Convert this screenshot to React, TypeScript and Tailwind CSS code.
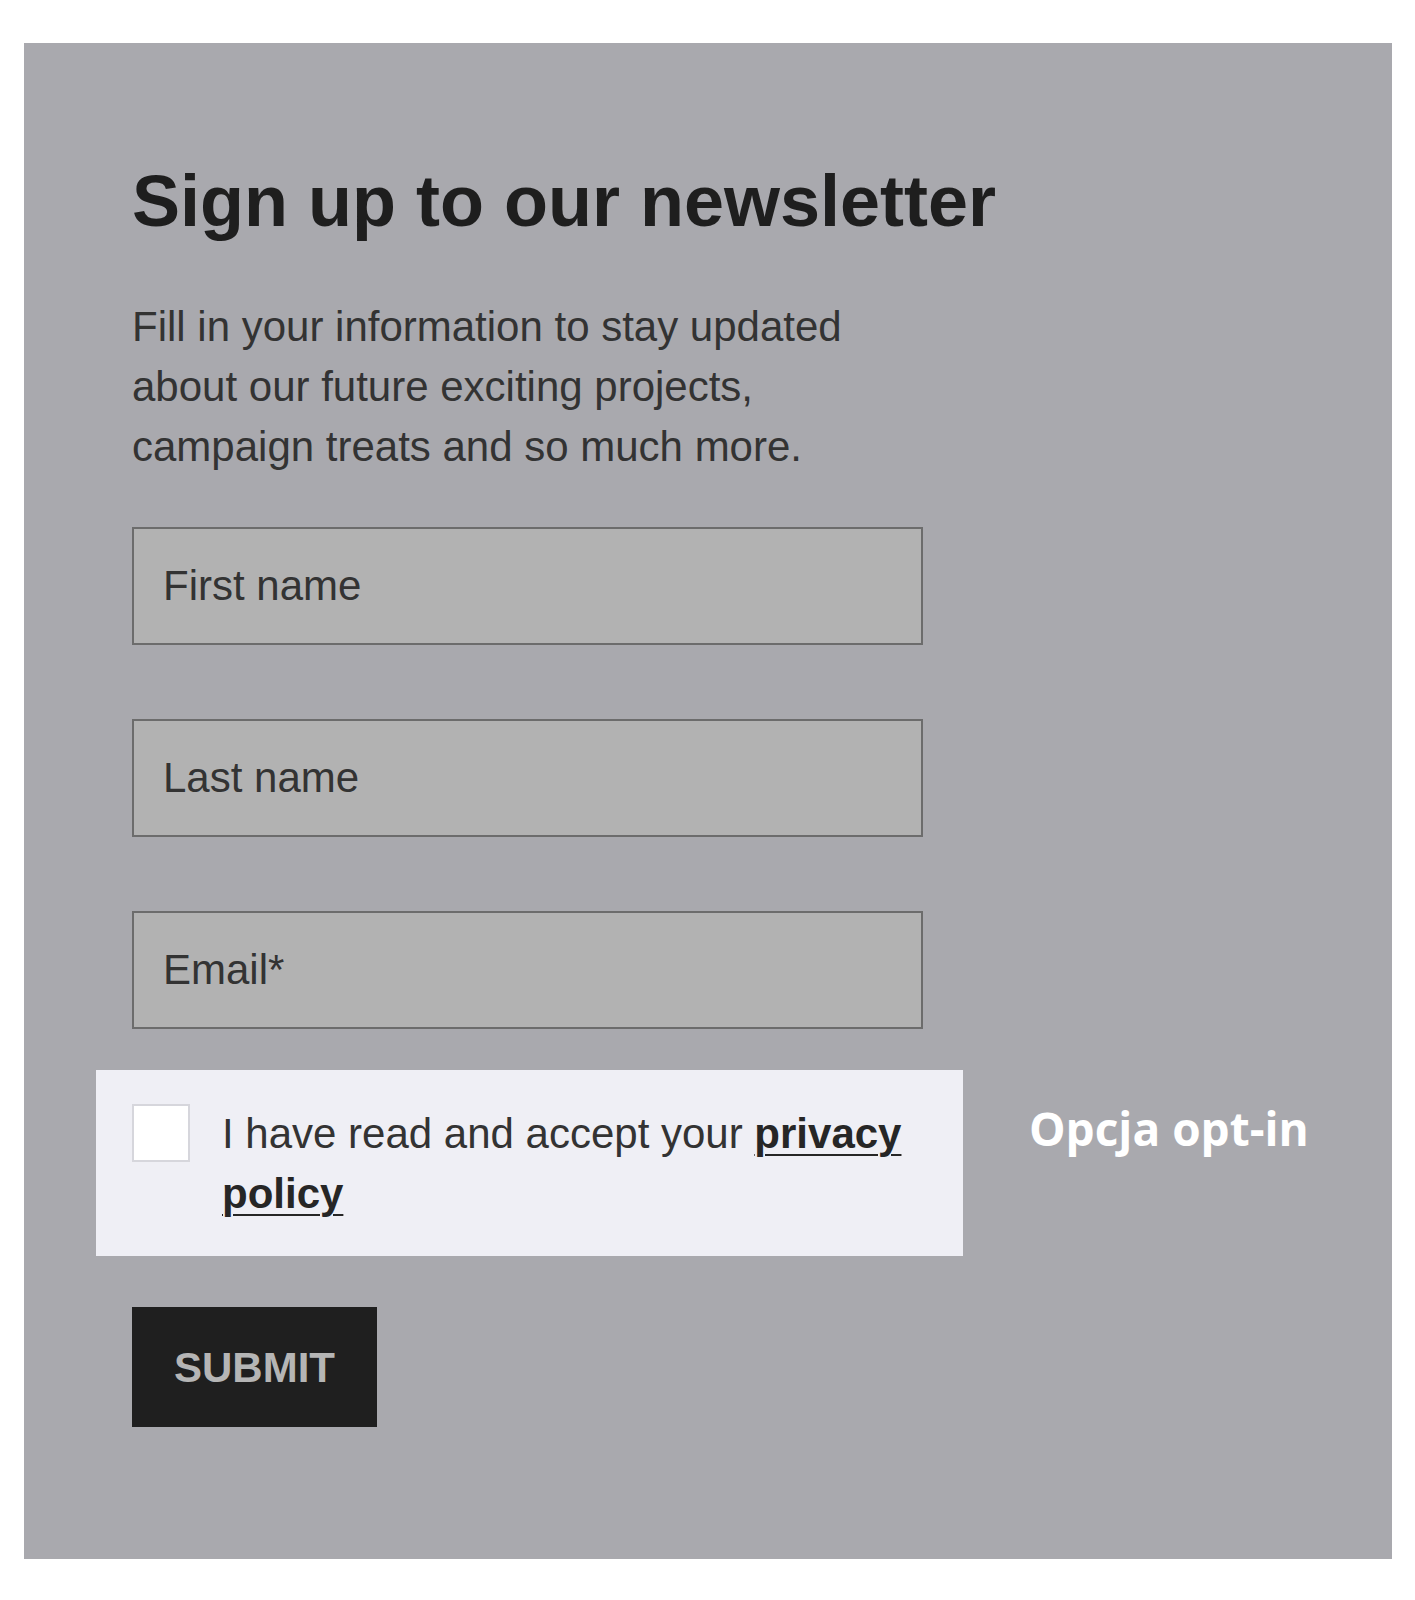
import React from 'react';

const fields = ['First name', 'Last name', 'Email*'];

const App = () => {
  return (
    <div className="min-h-screen bg-white pt-[43px] pl-[24px] font-['Liberation_Sans',Arial,sans-serif]">
      <section className="w-[1368px] bg-[#a9a9ae] pl-[108px] pt-[122px] pb-[132px]">
        <h1 className="text-[72px] leading-none font-bold text-[#1e1e1e]">
          Sign up to our newsletter
        </h1>
        <p className="mt-[60px] w-[760px] text-[42px] leading-[60px] text-[#333]">
          Fill in your information to stay updated about our future exciting projects, campaign treats and so much more.
        </p>

        <div className="mt-[50px] flex flex-col gap-[74px]">
          {fields.map((f) => (
            <input
              key={f}
              type="text"
              placeholder={f}
              className="w-[791px] h-[118px] border-2 border-[#6c6c6c] bg-[#b2b2b2] pl-[29px] text-[42px] text-[#333] placeholder:text-[#333] outline-none"
            />
          ))}
        </div>

        <div className="mt-[41px] flex items-start">
          <label className="-ml-[36px] w-[867px] flex items-start gap-[32px] bg-[#efeff5] pl-[36px] pr-[37px] pt-[34px] pb-[32px]">
            <span className="shrink-0 w-[58px] h-[58px] bg-white border-2 border-[#d6d6dc]" />
            <span className="text-[42px] leading-[60px] text-[#333]">
              I have read and accept your{' '}
              <a href="#" className="font-bold text-[#262626] underline decoration-2 underline-offset-[6px]">
                privacy policy
              </a>
            </span>
          </label>
          <span className="ml-[66px] mt-[35px] font-['Open_Sans',sans-serif] text-[46px] leading-none font-bold text-white">
            Opcja opt-in
          </span>
        </div>

        <button className="mt-[51px] w-[245px] h-[120px] bg-[#1f1f1f] text-[42px] font-bold text-[#b5b5b5]">
          SUBMIT
        </button>
      </section>
    </div>
  );
};

export default App;
